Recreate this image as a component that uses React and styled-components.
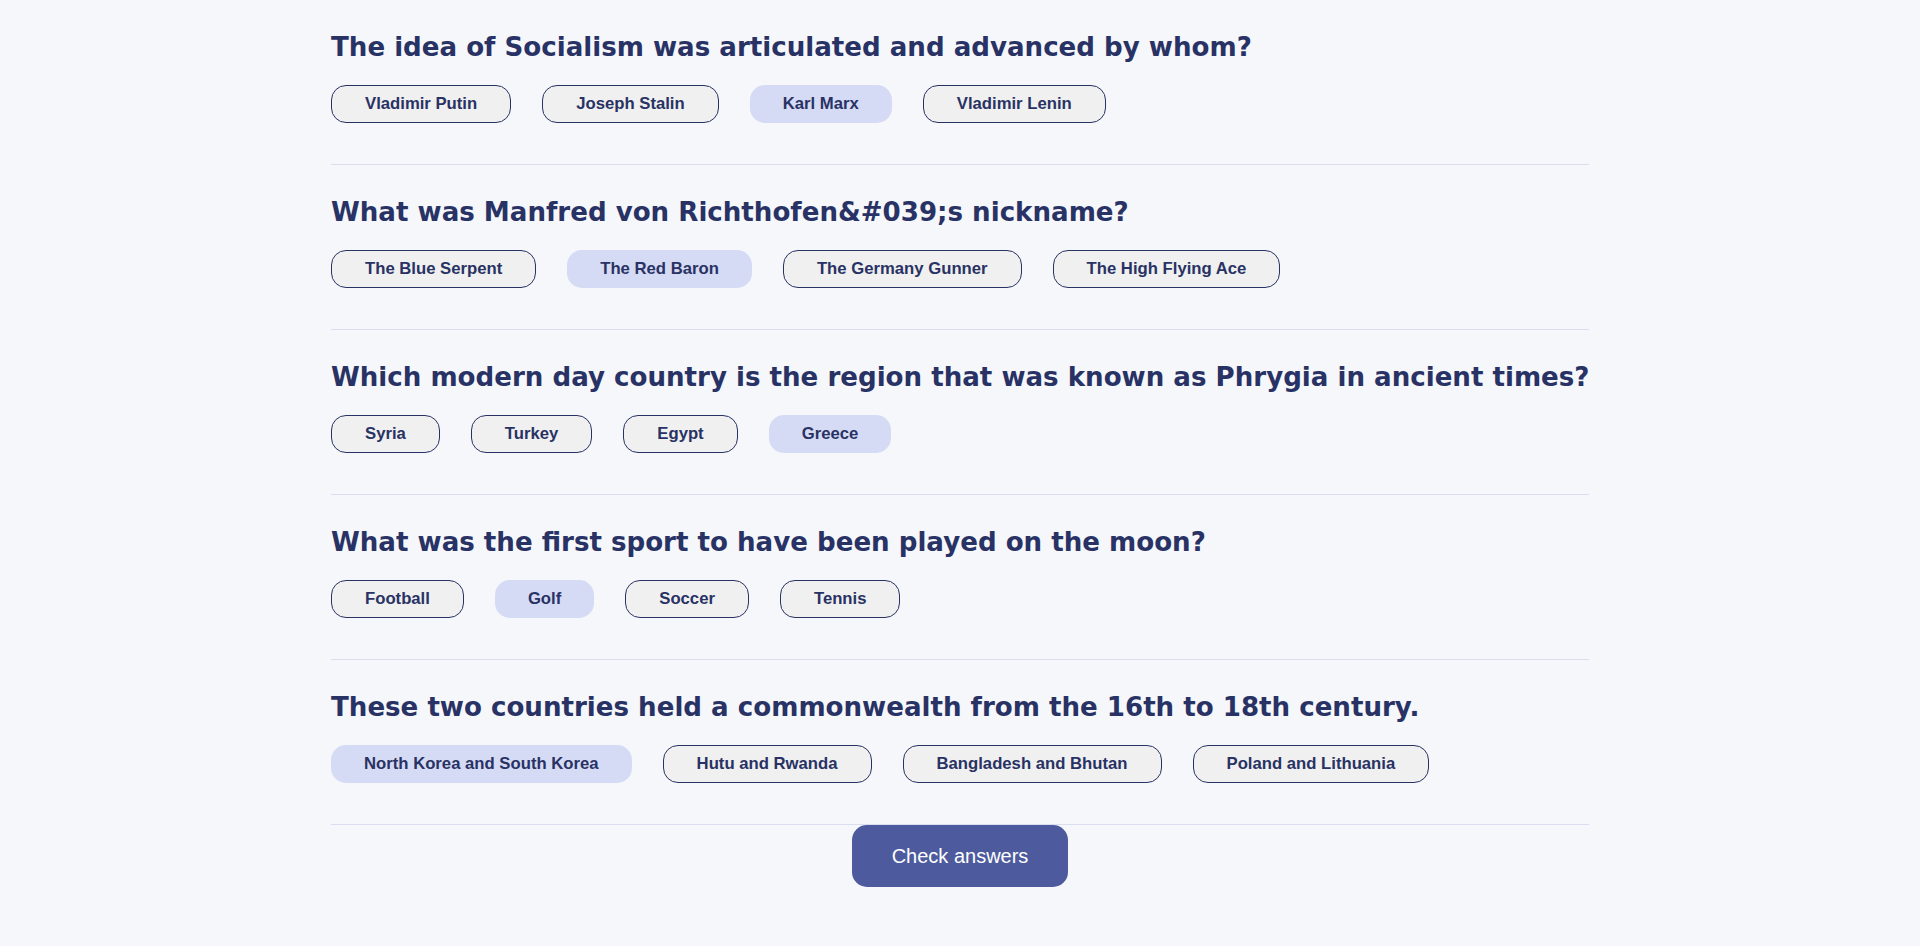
import React, { useState } from "react";
import styled, { createGlobalStyle } from "styled-components";

const GlobalStyle = createGlobalStyle`
  html, body {
    margin: 0;
    padding: 0;
    background: #F5F7FB;
  }
  body {
    font-family: "Liberation Sans", Arial, sans-serif;
  }
`;

const Page = styled.main`
  width: 1258px;
  margin: 0 auto;
  display: flex;
  flex-direction: column;
  align-items: stretch;
`;

const Section = styled.section`
  padding: 31px 0 41px;
  border-bottom: 1px solid #DBDEF0;
`;

const Question = styled.h2`
  margin: 0;
  font-family: "DejaVu Sans", Inter, sans-serif;
  font-weight: 700;
  font-size: 26.1px;
  line-height: 32px;
  color: #293264;
  white-space: nowrap;
`;

const Answers = styled.div`
  display: flex;
  flex-wrap: wrap;
  gap: 31px;
  margin-top: 22px;
`;

const Answer = styled.button`
  box-sizing: border-box;
  height: 38px;
  padding: 0 33px;
  border-radius: 15px;
  border: ${(p) => (p.$selected ? "none" : "1px solid #293264")};
  background: ${(p) => (p.$selected ? "#D6DBF5" : "#F0F0F0")};
  color: #293264;
  font-family: "Liberation Sans", Arial, sans-serif;
  font-weight: 700;
  font-size: 16.7px;
  line-height: 18px;
  cursor: pointer;
`;

const Footer = styled.div`
  display: flex;
  justify-content: center;
`;

const CheckButton = styled.button`
  box-sizing: border-box;
  height: 62px;
  padding: 0 40px;
  border: none;
  border-radius: 15px;
  background: #4D5B9E;
  color: #FFFFFF;
  font-family: "Liberation Sans", Arial, sans-serif;
  font-size: 20px;
  font-weight: 400;
  cursor: pointer;
`;

const QUESTIONS = [
  {
    q: "The idea of Socialism was articulated and advanced by whom?",
    a: ["Vladimir Putin", "Joseph Stalin", "Karl Marx", "Vladimir Lenin"],
    s: 2,
  },
  {
    q: "What was Manfred von Richthofen&#039;s nickname?",
    a: ["The Blue Serpent", "The Red Baron", "The Germany Gunner", "The High Flying Ace"],
    s: 1,
  },
  {
    q: "Which modern day country is the region that was known as Phrygia in ancient times?",
    a: ["Syria", "Turkey", "Egypt", "Greece"],
    s: 3,
  },
  {
    q: "What was the first sport to have been played on the moon?",
    a: ["Football", "Golf", "Soccer", "Tennis"],
    s: 1,
  },
  {
    q: "These two countries held a commonwealth from the 16th to 18th century.",
    a: ["North Korea and South Korea", "Hutu and Rwanda", "Bangladesh and Bhutan", "Poland and Lithuania"],
    s: 0,
  },
];

export default function App() {
  const [selected, setSelected] = useState(QUESTIONS.map((q) => q.s));
  const pick = (qi, ai) =>
    setSelected((prev) => prev.map((v, i) => (i === qi ? ai : v)));

  return (
    <>
      <GlobalStyle />
      <Page>
        {QUESTIONS.map((item, qi) => (
          <Section key={qi}>
            <Question>{item.q}</Question>
            <Answers>
              {item.a.map((ans, ai) => (
                <Answer
                  key={ai}
                  $selected={selected[qi] === ai}
                  onClick={() => pick(qi, ai)}
                >
                  {ans}
                </Answer>
              ))}
            </Answers>
          </Section>
        ))}
        <Footer>
          <CheckButton>Check answers</CheckButton>
        </Footer>
      </Page>
    </>
  );
}
